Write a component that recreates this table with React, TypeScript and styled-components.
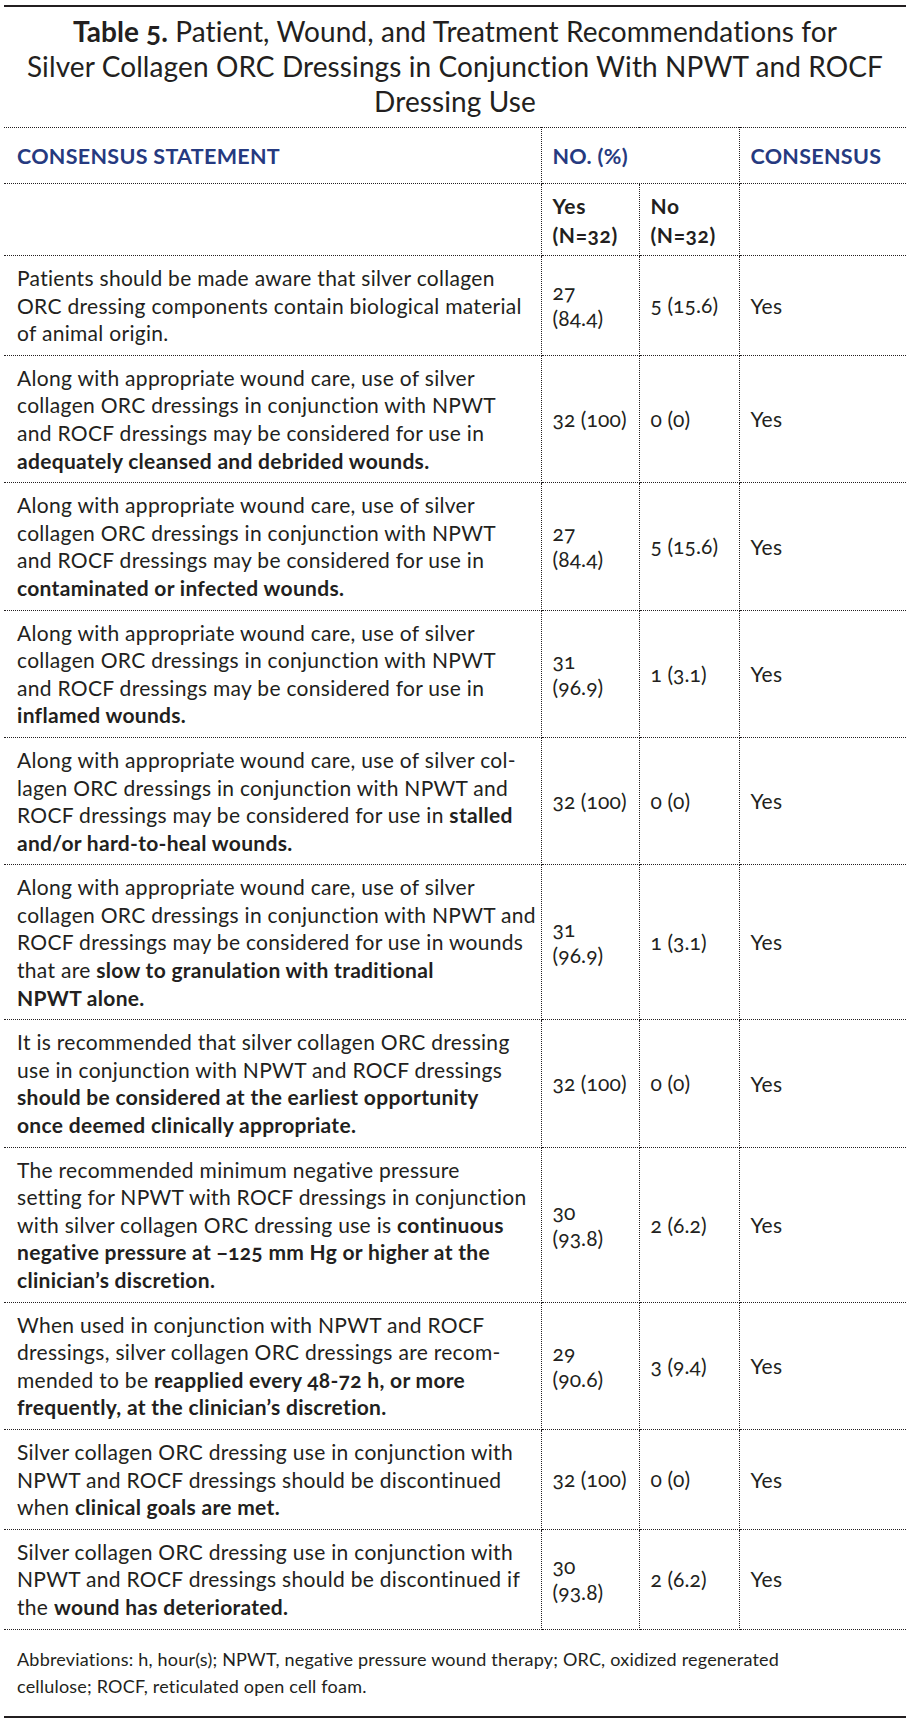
import React from "react";
import styled, { createGlobalStyle } from "styled-components";

const GlobalStyle = createGlobalStyle`
  body {
    margin: 0;
    background: #fff;
    color: #231f20;
    font-family: Lato, "Noto Sans", "Liberation Sans", sans-serif;
    font-variant-numeric: oldstyle-nums;
  }
`;

const Page = styled.div`
  width: 902px;
  padding: 5px 4px 0;
`;

const Rule = styled.div`
  border-top: 2px solid #231f20;
`;

const Title = styled.h1`
  margin: 7px 0 8px;
  font-size: 28px;
  line-height: 35px;
  font-weight: 400;
  letter-spacing: 0.1px;
  text-align: center;

  b {
    font-weight: 700;
  }
`;

const Table = styled.table`
  width: 902px;
  border-collapse: collapse;
  table-layout: fixed;
  border-top: 1px dotted #231f20;
`;

const HeadCell = styled.th<{ $last?: boolean }>`
  padding: 16px 11px 15px;
  font-size: 21.5px;
  line-height: 24px;
  font-weight: 700;
  letter-spacing: 0.3px;
  text-align: left;
  text-transform: uppercase;
  color: #263a80;
  border-bottom: 1px dotted #231f20;
  border-right: ${(p) => (p.$last ? "none" : "1px dotted #231f20")};

  &:first-child {
    padding-left: 13px;
  }
`;

const SubCell = styled.th<{ $last?: boolean }>`
  padding: 7px 11px 6px;
  font-size: 21px;
  line-height: 29px;
  font-weight: 700;
  letter-spacing: 0.6px;
  text-align: left;
  vertical-align: top;
  border-bottom: 1px dotted #231f20;
  border-right: ${(p) => (p.$last ? "none" : "1px dotted #231f20")};
`;

const Cell = styled.td<{ $last?: boolean; $num?: boolean }>`
  padding: 8px 11px 8px;
  font-size: 21px;
  line-height: ${(p) => (p.$num ? "26px" : "27.6px")};
  letter-spacing: ${(p) => (p.$num ? "0.1px" : "0.3px")};
  vertical-align: middle;
  white-space: ${(p) => (p.$num ? "pre" : "nowrap")};
  border-bottom: 1px dotted #231f20;
  border-right: ${(p) => (p.$last ? "none" : "1px dotted #231f20")};

  &:first-child {
    padding-left: 13px;
  }

  b {
    font-weight: 700;
  }
`;

const Line = styled.span`
  display: block;
`;

const Note = styled.p`
  margin: 16px 0 16px;
  padding: 0 13px;
  font-size: 18px;
  line-height: 27px;
  letter-spacing: 0.2px;
`;

type Row = {
  text: string[];
  yes: string;
  no: string;
};

const rows: Row[] = [
  {
    text: [
      "Patients should be made aware that silver collagen",
      "ORC dressing components contain biological material",
      "of animal origin.",
    ],
    yes: "27\n(84.4)",
    no: "5 (15.6)",
  },
  {
    text: [
      "Along with appropriate wound care, use of silver",
      "collagen ORC dressings in conjunction with NPWT",
      "and ROCF dressings may be considered for use in",
      "**adequately cleansed and debrided wounds.**",
    ],
    yes: "32 (100)",
    no: "0 (0)",
  },
  {
    text: [
      "Along with appropriate wound care, use of silver",
      "collagen ORC dressings in conjunction with NPWT",
      "and ROCF dressings may be considered for use in",
      "**contaminated or infected wounds.**",
    ],
    yes: "27\n(84.4)",
    no: "5 (15.6)",
  },
  {
    text: [
      "Along with appropriate wound care, use of silver",
      "collagen ORC dressings in conjunction with NPWT",
      "and ROCF dressings may be considered for use in",
      "**inflamed wounds.**",
    ],
    yes: "31\n(96.9)",
    no: "1 (3.1)",
  },
  {
    text: [
      "Along with appropriate wound care, use of silver col-",
      "lagen ORC dressings in conjunction with NPWT and",
      "ROCF dressings may be considered for use in **stalled**",
      "**and/or hard-to-heal wounds.**",
    ],
    yes: "32 (100)",
    no: "0 (0)",
  },
  {
    text: [
      "Along with appropriate wound care, use of silver",
      "collagen ORC dressings in conjunction with NPWT and",
      "ROCF dressings may be considered for use in wounds",
      "that are **slow to granulation with traditional**",
      "**NPWT alone.**",
    ],
    yes: "31\n(96.9)",
    no: "1 (3.1)",
  },
  {
    text: [
      "It is recommended that silver collagen ORC dressing",
      "use in conjunction with NPWT and ROCF dressings",
      "**should be considered at the earliest opportunity**",
      "**once deemed clinically appropriate.**",
    ],
    yes: "32 (100)",
    no: "0 (0)",
  },
  {
    text: [
      "The recommended minimum negative pressure",
      "setting for NPWT with ROCF dressings in conjunction",
      "with silver collagen ORC dressing use is **continuous**",
      "**negative pressure at −125 mm Hg or higher at the**",
      "**clinician’s discretion.**",
    ],
    yes: "30\n(93.8)",
    no: "2 (6.2)",
  },
  {
    text: [
      "When used in conjunction with NPWT and ROCF",
      "dressings, silver collagen ORC dressings are recom-",
      "mended to be **reapplied every 48-72 h, or more**",
      "**frequently, at the clinician’s discretion.**",
    ],
    yes: "29\n(90.6)",
    no: "3 (9.4)",
  },
  {
    text: [
      "Silver collagen ORC dressing use in conjunction with",
      "NPWT and ROCF dressings should be discontinued",
      "when **clinical goals are met.**",
    ],
    yes: "32 (100)",
    no: "0 (0)",
  },
  {
    text: [
      "Silver collagen ORC dressing use in conjunction with",
      "NPWT and ROCF dressings should be discontinued if",
      "the **wound has deteriorated.**",
    ],
    yes: "30\n(93.8)",
    no: "2 (6.2)",
  },
];

// "**" toggles bold inside a line
const Rich = ({ line }: { line: string }) => (
  <Line>
    {line.split("**").map((part, i) =>
      i % 2 ? <b key={i}>{part}</b> : <React.Fragment key={i}>{part}</React.Fragment>
    )}
  </Line>
);

const App = () => (
  <Page>
    <GlobalStyle />
    <Rule />
    <Title>
      <b>Table 5.</b> Patient, Wound, and Treatment Recommendations for
      <br />
      Silver Collagen ORC Dressings in Conjunction With NPWT and ROCF
      <br />
      Dressing Use
    </Title>
    <Table>
      <colgroup>
        <col style={{ width: 537 }} />
        <col style={{ width: 98 }} />
        <col style={{ width: 100 }} />
        <col style={{ width: 167 }} />
      </colgroup>
      <thead>
        <tr>
          <HeadCell>Consensus Statement</HeadCell>
          <HeadCell colSpan={2}>No. (%)</HeadCell>
          <HeadCell $last>Consensus</HeadCell>
        </tr>
        <tr>
          <SubCell />
          <SubCell>
            Yes
            <br />
            (N=32)
          </SubCell>
          <SubCell>
            No
            <br />
            (N=32)
          </SubCell>
          <SubCell $last />
        </tr>
      </thead>
      <tbody>
        {rows.map((row, i) => (
          <tr key={i}>
            <Cell>
              {row.text.map((line, j) => (
                <Rich key={j} line={line} />
              ))}
            </Cell>
            <Cell $num>{row.yes}</Cell>
            <Cell $num>{row.no}</Cell>
            <Cell $last>Yes</Cell>
          </tr>
        ))}
      </tbody>
    </Table>
    <Note>
      Abbreviations: h, hour(s); NPWT, negative pressure wound therapy; ORC, oxidized regenerated
      <br />
      cellulose; ROCF, reticulated open cell foam.
    </Note>
    <Rule />
  </Page>
);

export default App;
